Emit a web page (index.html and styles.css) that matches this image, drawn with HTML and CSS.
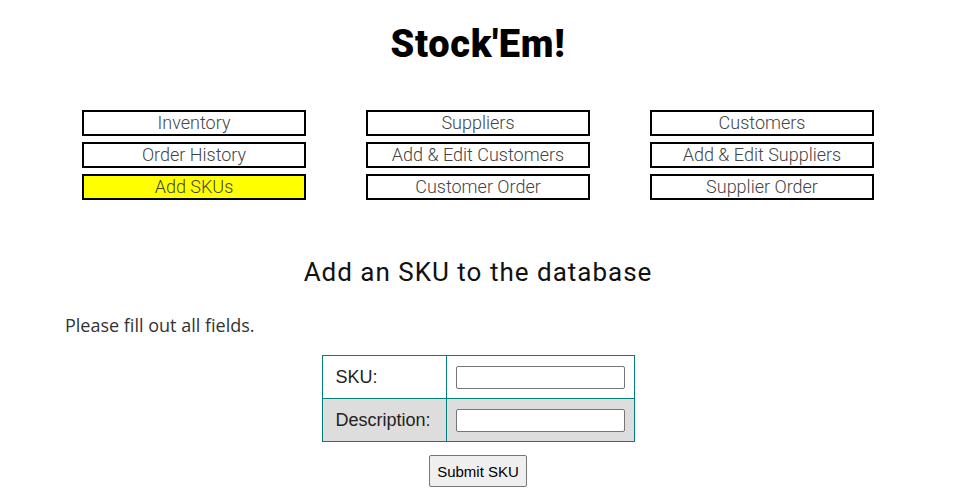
FILE: index.html
```html
<!doctype html>
<html lang="en">
  <head>
    <meta charset="utf-8">
    <title>Stock'Em! - Add SKUs</title>
    <link rel="stylesheet" href="styles.css">
  </head>

  <body>

    <header class="site-header">
      <h1 class="site-title">Stock'Em!</h1>
    </header>

    <!-- main navigation -->
    <nav class="main-nav">
      <a class="nav-link" href="/inventory">Inventory</a>
      <a class="nav-link" href="/suppliers">Suppliers</a>
      <a class="nav-link" href="/customers">Customers</a>
      <a class="nav-link" href="/orders">Order History</a>
      <a class="nav-link" href="/customers/edit">Add &amp; Edit Customers</a>
      <a class="nav-link" href="/suppliers/edit">Add &amp; Edit Suppliers</a>
      <a class="nav-link active" href="/skus/add">Add SKUs</a>
      <a class="nav-link" href="/orders/customer">Customer Order</a>
      <a class="nav-link" href="/orders/supplier">Supplier Order</a>
    </nav>

    <main class="content">
      <h2 class="page-title">Add an SKU to the database</h2>

      <p class="hint">Please fill out all fields.</p>

      <form class="sku-form">
        <table class="form-table">
          <tr>
            <td class="form-label"><label for="sku">SKU:</label></td>
            <td class="form-field"><input type="text" id="sku" name="sku"></td>
          </tr>
          <tr class="alt">
            <td class="form-label"><label for="description">Description:</label></td>
            <td class="form-field"><input type="text" id="description" name="description"></td>
          </tr>
        </table>
        <div class="form-actions">
          <button type="submit" class="submit-btn">Submit SKU</button>
        </div>
      </form>
    </main>

  </body>
</html>
```

FILE: styles.css
```css
body {
  margin: 0;
  font-family: "Open Sans", sans-serif;
  color: #222;
}
/* header */
.site-header {
  text-align: center;
  padding-top: 22px;
}
.site-title {
  margin: 0;
  font-family: Roboto, sans-serif;
  font-weight: 900;
  font-size: 38px;
  line-height: 44px;
  letter-spacing: 0.7px;
  color: #000;
}
/* navigation grid */
.main-nav {
  display: grid;
  grid-template-columns: repeat(3, 224px);
  column-gap: 60px;
  row-gap: 6px;
  justify-content: center;
  margin-top: 44px;
}
.nav-link {
  display: block;
  box-sizing: border-box;
  height: 26px;
  border: 2px solid #000;
  background-color: #fff;
  font-family: Roboto, sans-serif;
  font-weight: 300;
  font-size: 18px;
  line-height: 22px;
  color: #444;
  text-align: center;
  text-decoration: none;
}
.nav-link.active {
  background-color: #ff0;
}
/* content */
.page-title {
  margin: 57px 0 0;
  font-family: Roboto, sans-serif;
  font-weight: 400;
  font-size: 26px;
  line-height: 30px;
  letter-spacing: 1px;
  text-align: center;
  color: #111;
}
.hint {
  margin: 26px 0 0 65px;
  font-size: 18px;
  line-height: 24px;
  color: #333;
}
.sku-form {
  margin-top: 18px;
}
.form-table {
  margin: 0 auto;
  border-collapse: collapse;
  border: 1px solid #008080;
  font-family: "Liberation Sans", Arial, sans-serif;
  font-size: 18px;
  color: #222;
}
.form-table td {
  height: 42px;
  padding: 0;
  border: 1px solid #008080;
}
.form-table .alt td {
  background-color: #ddd;
}
.form-label {
  width: 110px;
  padding-left: 13px !important;
}
.form-field {
  width: 168px;
  padding: 0 9px !important;
}
.form-field input {
  display: block;
  box-sizing: border-box;
  width: 169px;
  height: 23px;
  margin: 0;
  border: 1px solid #767676;
  border-radius: 2px;
  background-color: #fff;
}
.form-actions {
  text-align: center;
  margin-top: 13px;
}
.submit-btn {
  width: 98px;
  height: 32px;
  padding: 0;
  border: 1px solid #767676;
  border-radius: 2px;
  background-color: #efefef;
  font-family: "Liberation Sans", Arial, sans-serif;
  font-size: 15px;
  color: #000;
}
```
